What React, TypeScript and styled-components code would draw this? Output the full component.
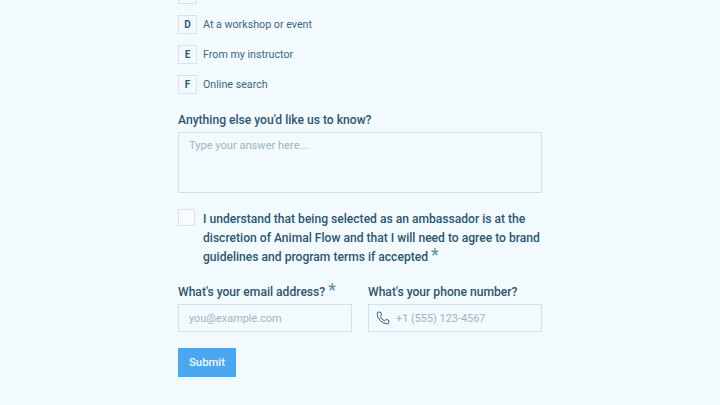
import styled, { createGlobalStyle } from "styled-components";
import { Phone } from "lucide-react";

const GlobalStyle = createGlobalStyle`
  html, body {
    margin: 0;
    padding: 0;
    background: #f3fafe;
  }
  * {
    box-sizing: border-box;
  }
`;

// the first row is scrolled out of view, only the bottom of its box shows
const options = [
  { key: "", text: "" },
  { key: "D", text: "At a workshop or event" },
  { key: "E", text: "From my instructor" },
  { key: "F", text: "Online search" },
];

const App = () => {
  return (
    <Page>
      <GlobalStyle />
      <Form>
        <OptionList>
          {options.map((option) => (
            <Option key={option.key}>
              <OptionKey>{option.key}</OptionKey>
              <OptionText>{option.text}</OptionText>
            </Option>
          ))}
        </OptionList>

        <Field>
          <Label>Anything else you'd like us to know?</Label>
          <TextArea>Type your answer here...</TextArea>
        </Field>

        <Consent>
          <CheckBox />
          <ConsentText>
            I understand that being selected as an ambassador is at the
            discretion of Animal Flow and that I will need to agree to brand
            guidelines and program terms if accepted <Star>*</Star>
          </ConsentText>
        </Consent>

        <FieldRow>
          <Field>
            <Label>
              What's your email address? <Star>*</Star>
            </Label>
            <Input>you@example.com</Input>
          </Field>
          <Field>
            <Label>What's your phone number?</Label>
            <PhoneInput>
              <Phone size={14} strokeWidth={1.7} color="#2f5f78" />
              <span>+1 (555) 123-4567</span>
            </PhoneInput>
          </Field>
        </FieldRow>

        <SubmitButton>Submit</SubmitButton>
      </Form>
    </Page>
  );
};

const Page = styled.div`
  width: 720px;
  height: 405px;
  overflow: hidden;
  display: flex;
  flex-direction: column;
  justify-content: flex-end;
  align-items: center;
  padding: 0 0 28px;
  background: #f3fafe;
  font-family: Roboto, "Liberation Sans", sans-serif;
`;

const Form = styled.div`
  width: 364px;
  flex-shrink: 0;
  display: flex;
  flex-direction: column;
  align-items: flex-start;
`;

const OptionList = styled.div`
  display: flex;
  flex-direction: column;
  gap: 11px;
  margin-bottom: 17px;
`;

const Option = styled.div`
  display: flex;
  align-items: center;
  gap: 6px;
  height: 19px;
`;

const OptionKey = styled.div`
  width: 19px;
  height: 19px;
  display: flex;
  align-items: center;
  justify-content: center;
  border: 1px solid #d3e6ee;
  font-size: 10px;
  font-weight: 700;
  color: #2f5a75;
`;

const OptionText = styled.span`
  font-size: 10.7px;
  color: #3c6680;
`;

const Field = styled.div`
  display: flex;
  flex-direction: column;
  width: 100%;
`;

const Label = styled.label`
  font-size: 12.1px;
  font-weight: 500;
  line-height: 18px;
  color: #2a5670;
  margin: 0 0 3px;
  white-space: nowrap;
`;

const TextArea = styled.div`
  height: 61px;
  padding: 6px 10px;
  border: 1px solid #cfe3eb;
  font-size: 11.1px;
  line-height: 14px;
  color: #9db4c0;
`;

const Consent = styled.div`
  display: flex;
  gap: 8px;
  margin-top: 16px;
  width: 100%;
`;

const CheckBox = styled.div`
  width: 17px;
  height: 17px;
  flex-shrink: 0;
  border: 1px solid #d3e6ee;
  background: #f8fcfe;
`;

const ConsentText = styled.p`
  margin: 1px 0 0;
  font-size: 12.1px;
  font-weight: 500;
  line-height: 19px;
  color: #2a5670;
`;

const Star = styled.span`
  font-size: 18px;
  line-height: 10px;
  font-weight: 400;
  color: #5b8ca3;
`;

const FieldRow = styled.div`
  display: grid;
  grid-template-columns: 174px 174px;
  gap: 16px;
  margin-top: 16px;
  width: 100%;
`;

const Input = styled.div`
  height: 28px;
  padding: 0 10px;
  display: flex;
  align-items: center;
  border: 1px solid #cfe3eb;
  font-size: 10.9px;
  color: #9db4c0;
`;

const PhoneInput = styled(Input)`
  padding-left: 7px;
  gap: 6px;
`;

const SubmitButton = styled.button`
  margin-top: 16px;
  width: 58px;
  height: 29px;
  border: none;
  padding: 0;
  background: #4aa8f2;
  color: #f3fafe;
  font-family: Roboto, "Liberation Sans", sans-serif;
  font-size: 11.3px;
  font-weight: 500;
`;

export default App;
